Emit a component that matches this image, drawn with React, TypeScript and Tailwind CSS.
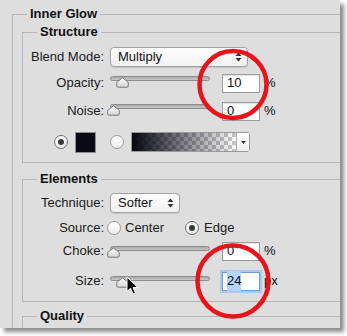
import type { ReactNode } from 'react';

const font = { fontFamily: '"Liberation Sans", Arial, sans-serif' };

function Group({ title, className = '', children }: { title: string; className?: string; children?: ReactNode }) {
  return (
    <fieldset className={'border-t border-l border-[#b7b7b7] ' + className}>
      <legend className="ml-[14px] px-[3px] text-[13px] font-bold leading-[16px] text-[#111]">{title}</legend>
      {children}
    </fieldset>
  );
}

function Label({ children }: { children: ReactNode }) {
  return <span className="w-[81px] shrink-0 text-right text-[13px] text-[#1a1a1a]">{children}</span>;
}

function UpDown() {
  return (
    <svg width="7" height="10" viewBox="0 0 7 10" className="shrink-0">
      <path d="M3.5 0.5 L6.5 4 L0.5 4 Z" fill="#333" />
      <path d="M3.5 9.5 L6.5 6 L0.5 6 Z" fill="#333" />
    </svg>
  );
}

function Select({ value, width }: { value: string; width: string }) {
  return (
    <div
      className={
        'ml-[6px] flex h-[20px] items-center justify-between rounded-[4px] border border-[#a3a3a3] bg-linear-to-b from-white to-[#f1f1f1] pr-[5px] pl-[7px] text-[13px] text-[#111] shadow-[0_1px_1px_rgba(0,0,0,0.12)] ' +
        width
      }
    >
      <span>{value}</span>
      <UpDown />
    </div>
  );
}

function Thumb() {
  return (
    <svg width="13" height="11" viewBox="0 0 13 11">
      <defs>
        <linearGradient id="tg" x1="0" y1="0" x2="0" y2="1">
          <stop offset="0" stopColor="#ffffff" />
          <stop offset="1" stopColor="#d4d4d4" />
        </linearGradient>
      </defs>
      <path
        d="M6.5 0.8 L12.3 5.4 L12.3 8.8 Q12.3 10.2 10.9 10.2 L2.1 10.2 Q0.7 10.2 0.7 8.8 L0.7 5.4 Z"
        fill="url(#tg)"
        stroke="#7a7a7a"
        strokeWidth="1"
      />
    </svg>
  );
}

function Slider({ value, max }: { value: number; max: number }) {
  const left = (value / max) * 92;
  return (
    <div className="relative mt-[6px] ml-[3px] h-[13px] w-[103px] self-start">
      <div className="absolute top-0 left-[3px] h-[5px] w-[100px] rounded-full border border-[#8c8c8c] bg-linear-to-b from-[#a9a9a9] to-[#c9c9c9]" />
      <div className="absolute top-[1px]" style={{ left }}>
        <Thumb />
      </div>
    </div>
  );
}

function NumBox({ value, unit, focused }: { value: string; unit: string; focused?: boolean }) {
  return (
    <>
      <div
        className={
          'ml-[12px] flex h-[19px] w-[38px] items-center bg-white pl-[4px] text-[13px] text-[#111] ' +
          (focused
            ? 'border border-[#6d9fd8] ring-2 ring-[#a7c9f1]'
            : 'border border-[#9c9c9c] shadow-[inset_0_1px_1px_rgba(0,0,0,0.12)]')
        }
      >
        {focused ? <span className="bg-[#b4d5fe]">{value}</span> : value}
      </div>
      <span className="ml-[4px] text-[13px] text-[#111]">{unit}</span>
    </>
  );
}

function Radio({ checked }: { checked?: boolean }) {
  return (
    <span
      className={
        'flex h-[14px] w-[14px] shrink-0 items-center justify-center rounded-full border bg-linear-to-b from-white to-[#ececec] ' +
        (checked ? 'border-[#6f6f6f]' : 'border-[#9a9a9a]')
      }
    >
      {checked && <span className="h-[6px] w-[6px] rounded-full bg-[#3a3a3a]" />}
    </span>
  );
}

export default function App() {
  return (
    <div className="h-[336px] w-[347px] bg-white" style={font}>
      <div className="relative h-[328px] w-[340px] overflow-hidden bg-[#dedede] pt-[6px] pl-[12px] shadow-[4px_4px_4px_rgba(0,0,0,0.45)]">
        <Group title="Inner Glow" className="w-[400px]">
          <div className="pt-[2px] pl-[9px]">
            <Group title="Structure" className="border-b pb-[9px]">
              <div className="mt-[7px] flex h-[20px] items-center">
                <Label>Blend Mode:</Label>
                <Select value="Multiply" width="w-[138px]" />
              </div>
              <div className="mt-[3px] flex h-[26px] items-center">
                <Label>Opacity:</Label>
                <Slider value={10} max={100} />
                <NumBox value="10" unit="%" />
              </div>
              <div className="mt-[2px] flex h-[26px] items-center">
                <Label>Noise:</Label>
                <Slider value={0} max={100} />
                <NumBox value="0" unit="%" />
              </div>
              <div className="mt-[7px] flex h-[22px] items-center">
                <span className="ml-[31px]">
                  <Radio checked />
                </span>
                <span className="ml-[7px] h-[21px] w-[21px] border border-[#8e8e8e] bg-[#0a0a16]" />
                <span className="ml-[14px]">
                  <Radio />
                </span>
                <div className="ml-[7px] flex h-[20px] items-stretch rounded-r-[3px] border border-[#9a9a9a] bg-white">
                  <div className="relative w-[104px] bg-[conic-gradient(#c8c8c8_25%,#ffffff_0_50%,#c8c8c8_0_75%,#ffffff_0)] bg-[length:8px_8px]">
                    <div className="absolute inset-0 bg-linear-to-r from-[#05050f] to-transparent" />
                  </div>
                  <div className="flex w-[13px] items-center justify-center border-l border-[#b0b0b0] bg-linear-to-b from-white to-[#eeeeee]">
                    <svg width="5" height="3" viewBox="0 0 5 3">
                      <path d="M0 0 L5 0 L2.5 3 Z" fill="#333" />
                    </svg>
                  </div>
                </div>
              </div>
            </Group>

            <Group title="Elements" className="mt-[8px] border-b pb-[9px]">
              <div className="mt-[6px] flex h-[20px] items-center">
                <Label>Technique:</Label>
                <Select value="Softer" width="w-[70px]" />
              </div>
              <div className="mt-[4px] flex h-[22px] items-center text-[13px] text-[#1a1a1a]">
                <Label>Source:</Label>
                <span className="ml-[3px]">
                  <Radio />
                </span>
                <span className="ml-[4px]">Center</span>
                <span className="ml-[21px]">
                  <Radio checked />
                </span>
                <span className="ml-[5px]">Edge</span>
              </div>
              <div className="mt-[1px] flex h-[22px] items-center">
                <Label>Choke:</Label>
                <Slider value={0} max={100} />
                <NumBox value="0" unit="%" />
              </div>
              <div className="mt-[8px] flex h-[22px] items-center">
                <Label>Size:</Label>
                <Slider value={24} max={250} />
                <NumBox value="24" unit="px" focused />
              </div>
            </Group>

            <Group title="Quality" className="mt-[6px] h-[40px]" />
          </div>
        </Group>

        <svg className="pointer-events-none absolute top-0 left-0" width="340" height="328">
          <ellipse cx="233" cy="84.5" rx="33.5" ry="33.5" fill="none" stroke="#e8141b" strokeWidth="4.5" />
          <ellipse cx="233" cy="281" rx="35.5" ry="35.5" fill="none" stroke="#e8141b" strokeWidth="4.5" />
        </svg>

        <svg className="pointer-events-none absolute top-[276px] left-[126px]" width="14" height="20" viewBox="0 0 14 20">
          <path d="M1 1 L1 15.5 L4.6 12.2 L7.1 18 L9.4 17 L7 11.4 L11.8 11.4 Z" fill="#000" stroke="#fff" strokeWidth="1" />
        </svg>
      </div>
    </div>
  );
}
